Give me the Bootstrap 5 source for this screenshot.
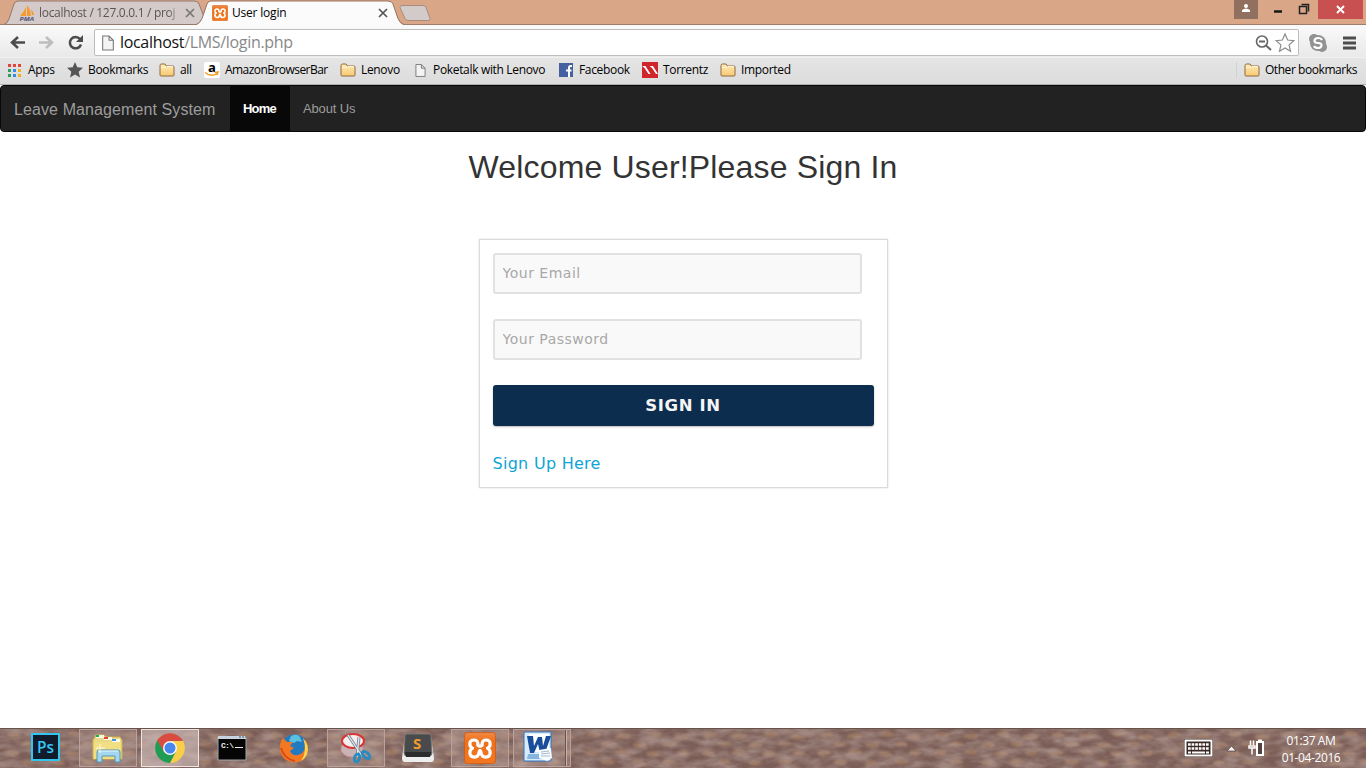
<!DOCTYPE html>
<html lang="en">
<head>
<meta charset="utf-8">
<title>User login</title>
<link href="https://cdn.jsdelivr.net/npm/bootstrap@5.3.0/dist/css/bootstrap.min.css" rel="stylesheet">
<style>
body{width:1366px;height:768px;overflow:hidden;font-family:"Open Sans","Noto Sans",sans-serif;font-size:12px;line-height:16px;color:#000;background:#fff}
svg{display:block;flex:none}
.strip{height:25px;background:#d9a688;position:relative;flex:none}
.strip .shapes{position:absolute;left:0;top:0}
.strip .labels{position:relative;height:25px;display:grid;grid-template-columns:19px 181px 12px 176px 1fr auto;align-items:center}
.tablabel{white-space:nowrap;font-size:12px;letter-spacing:-.2px}
.fade-end{width:142px;color:#5b5556;letter-spacing:-.3px;-webkit-mask-image:linear-gradient(90deg,#000 91%,transparent 100%)}
.toolbar{height:32px;background:linear-gradient(#fafafa,#e9e9e9);padding:4px 8px 1px 9px;flex:none}
.omni{width:1205px;height:27px;background:#fff;border:1px solid #bdbdbd;border-radius:2px;font-size:16px;padding:0 3px 0 6px}
.omni .url{letter-spacing:-.32px;color:#888;line-height:20px;padding-bottom:1px}
.omni .url b{font-weight:400;color:#111}
.marks{height:28px;background:linear-gradient(#e5e5e5,#dcdcdc);border-bottom:1px solid #aab0ae;border-top:1px solid #f0f0f0;display:grid;grid-template-columns:59px 92px 45px 136px 75px 144px 83px 78px 1fr auto;padding:0 9px 2px 8px;align-items:center;flex:none}
.bm{display:flex;align-items:center;gap:5px;white-space:nowrap;letter-spacing:-.33px}
.mainnav{height:47px;background:#222;border:1px solid #080808;border-radius:4px;padding:0;font-family:"Liberation Sans",sans-serif;flex:none}
.mainnav .navbar-brand{color:#9d9d9d;font-size:16px;padding:2px 0 0 13px;margin:0;width:229px;letter-spacing:.1px}
.mainnav .nav-link{color:#9d9d9d;font-size:13px;height:45px;padding:0 13px!important;line-height:46px}
.mainnav .nav-link.active{color:#fff;font-weight:700;background:#080808;width:60px;letter-spacing:-.8px}
.mainnav .about{letter-spacing:-.15px}
.heading{font:400 32px/36px "Liberation Sans",sans-serif;color:#333;letter-spacing:.17px;padding-top:17px;margin:0 0 54px}
.signin{width:409px;height:249px;border:1px solid #dadada;box-shadow:0 0 2px #ddd;padding:13px 13px;font-family:"DejaVu Sans",sans-serif}
.signin .form-control{width:369px;height:41px;border:2px solid #e1e1e1;border-radius:3px;background:#f9f9f9;font-size:14px;letter-spacing:.5px;padding:0 8px 2px;margin-bottom:25px}
.signin .form-control::placeholder{color:#a8a8a8}
.signin .btn{width:381px;height:41px;background:#0d2d4e;color:#f5f5f5;border:0;border-radius:3px;font-weight:700;font-size:16.5px;letter-spacing:.6px;box-shadow:0 1px 2px #bbb;padding:2px 0 0}
.signup{font-size:16px;color:#0fa4d3;text-decoration:none;margin-top:27px;line-height:22px;letter-spacing:.28px}
.taskbar{height:40px;position:relative;background:#7b6058;flex:none;overflow:hidden}
.taskbar .texture{position:absolute;left:0;top:0}
.taskrow{position:relative;padding-left:17px;height:40px;gap:4px}
.app{width:58px;height:38px;display:flex;align-items:center;justify-content:center;margin-top:1px}
.opened{background:#c7aea74c;border:1px solid #b9a29d}
.current{background:#cbb9b7a8;border:1px solid #eee4e2}
.clock{color:#fff;font-size:12px;line-height:17px;width:70px;text-align:center;letter-spacing:-.4px;margin:2px 0 0 5px}
</style>
</head>
<body>
<svg width="0" height="0" class="position-absolute"><defs>
<linearGradient id="fg" x2="0" y2="1"><stop stop-color="#ffecb8"/><stop offset="1" stop-color="#f6c971"/></linearGradient>
<linearGradient id="xg" x2="0" y2="1"><stop stop-color="#f08a45"/><stop offset=".3" stop-color="#ee701c"/><stop offset="1" stop-color="#f0781f"/></linearGradient>
<symbol id="folder" viewBox="0 0 16 14"><path d="M1 12V2.500Q1 1 2.500 1H6l1.500 2H14q1 0 1 1v8q0 1-1 1H2q-1 0-1-1Z" fill="url(#fg)" stroke="#926940"/><path d="M2 4.500h5l1-1h6" fill="none" stroke="#fff5d5"/></symbol>
<symbol id="xampp" viewBox="0 0 30 30"><rect x=".4" y=".4" width="29.200" height="29.200" rx="3" fill="url(#xg)" stroke="#cf5a16" stroke-width=".8"/><path d="M13 12.500Q13.500 7.500 9.500 7.500 5.500 7.500 5.500 11.200q0 3 2.500 4-2.500 1-2.500 4.200 0 4.100 4.500 4.100 3.500 0 4-4 .3-2 1-2t1 2q.5 4 4 4 4.500 0 4.500-4.100 0-3.200-2.500-4.200 2.500-1 2.500-4 0-3.700-4-3.700-4 0-3.500 5-2 1.800-4 0Z" fill="none" stroke="#fff" stroke-width="3" stroke-linejoin="round"/></symbol>
<symbol id="page" viewBox="0 0 12 15"><path d="M1 1h6l4 4v9H1ZM7 1v4h4" fill="#f4f4f4" stroke="#777"/></symbol>
</defs></svg>
<div class="d-flex flex-column h-100">
<header class="strip">
<svg class="shapes" width="1366" height="25"><path d="M0 24.500H1366" stroke="#a27d69"/><path d="M4 24.500Q7 24 9 19L14 4q1-3 4-3H194q4 0 5 3l8 20.500Z" fill="#d3cac9" stroke="#94796d"/><path d="M196 25q4-1 6-6l5-15q1-3 4-3H388q4 0 5 3l5 15q2 5 6 6Z" fill="#fbfbfb"/><path d="M196 24.500q4-1 6-6l5-14.500q1-3 4-3H388q4 0 5 3l5 14.500q2 5 6 6" fill="none" stroke="#97735e"/><path d="M402 5.500h21q2 0 3 2l4 11q1 2-2 2h-20q-2 0-3-2l-5-11q0-2 2-2Z" fill="#d2cbca" stroke="#aa8c7c"/>
<path d="M186 9l8 8m0-8l-8 8" stroke="#777" stroke-width="1.700"/><path d="M379 9l8 8m0-8l-8 8" stroke="#555" stroke-width="1.700"/></svg>
<div class="labels"><span></span><div class="d-flex gap-1"><svg width="16" height="16" viewBox="0 0 16 16" overflow="visible"><path d="M7 2v9l-6 0Q5 7 7 2M8 0q4 5 4 11H8M12 4q3 4 3 6h-2" fill="#f59b2d"/><text x=".5" y="15.500" font-size="5.500" font-weight="700" font-style="italic" textLength="14.500" lengthAdjust="spacingAndGlyphs" fill="#555376">PMA</text></svg><span class="tablabel fade-end">localhost / 127.0.0.1 / proj</span></div><span></span><div class="d-flex gap-1"><svg width="16" height="16"><use href="#xampp"/></svg><span class="tablabel">User login</span></div><span></span>
<svg width="133" height="25"><path d="M1 0h24v19H1Z" fill="#92705f"/><circle cx="13" cy="6" r="2" fill="#fff"/><path d="M9 12V10q4-3 8 0v2Z" fill="#fff"/><path d="M41 11.500h8" stroke="#171717" stroke-width="2.500"/><path d="M66.500 6.500h7v7h-7ZM68.500 4.500h7v7" fill="none" stroke="#222" stroke-width="1.500"/><path d="M85 0h45v19H85Z" fill="#c85050"/><path d="M104 6l7 7m0-7l-7 7" stroke="#fff" stroke-width="2"/></svg></div>
</header>
<div class="toolbar d-flex align-items-center">
<svg width="85" height="27" viewBox="9 29 85 27"><path d="M25 42.500H12m6-5.500l-6 5.500 6 5.500" fill="none" stroke="#4c4c4c" stroke-width="2.500"/><path d="M39 42.500h13m-6-5.500l6 5.500-6 5.500" fill="none" stroke="#bdbdbd" stroke-width="2.500"/><path d="M80 39a5.700 5.700 0 1 0 1 5.500" fill="none" stroke="#4c4c4c" stroke-width="2.500"/><path d="M83 35v7h-7Z" fill="#4c4c4c"/></svg>
<div class="omni d-flex align-items-center"><svg width="14" height="16" style="margin-right:5px"><use href="#page"/></svg><span class="url flex-grow-1"><b>localhost</b>/LMS/login.php</span>
<svg width="42" height="22"><circle cx="9" cy="9.500" r="5.500" fill="none" stroke="#666" stroke-width="1.600"/><path d="M13 13.500l5 4.500M6 9.500h6" stroke="#666" stroke-width="2"/><path d="M32 2l2.600 6 6.200.7-4.700 4.200 1.400 6.400L32 16l-5.500 3.300 1.400-6.400-4.700-4.200 6.200-.7Z" fill="#fff" stroke="#8b8b8b" stroke-width="1.200"/></svg></div>
<svg class="ms-auto" width="49" height="22"><circle cx="9" cy="11" r="8" fill="#929292"/><circle cx="5" cy="7" r="5" fill="#929292"/><circle cx="13" cy="15" r="5" fill="#929292"/><path d="M13 8Q12 6 9 6T5.500 8.500 9 11t3.500 2.500T9 16t-4-2" fill="none" stroke="#fff" stroke-width="2.200"/><path d="M34 6h13M34 11h13M34 16h13" stroke="#4d4d4d" stroke-width="2.800"/></svg>
</div>
<nav class="marks">
<div class="bm" style="gap:7px"><svg width="13" height="13"><path d="M0 0h3v3H0M5 0h3v3H5M10 0h3v3h-3" fill="#e8433b"/><path d="M0 5h3v3H0M0 10h3v3H0" fill="#26a35a"/><path d="M5 5h3v3H5M5 10h3v3H5" fill="#398bea"/><path d="M10 5h3v3h-3M10 10h3v3h-3" fill="#efb21b"/></svg>Apps</div>
<div class="bm"><svg width="16" height="16"><path d="M8 0l2.300 5.300 5.700.5-4.300 3.900 1.300 5.800-5-3-5 3 1.300-5.800L0 5.800l5.700-.5Z" fill="#555"/></svg>Bookmarks</div>
<div class="bm"><svg width="16" height="14"><use href="#folder"/></svg>all</div>
<div class="bm"><svg width="16" height="16" overflow="visible"><rect width="16" height="16" rx="2" fill="#fff"/><text x="4" y="10" font-size="13" font-weight="700">a</text><path d="M1 10.500q6 5 12 1M11 10.500l3-.5-1 3" fill="none" stroke="#f7981d" stroke-width="1.500"/></svg><span style="letter-spacing:-.55px">AmazonBrowserBar</span></div>
<div class="bm"><svg width="16" height="14"><use href="#folder"/></svg>Lenovo</div>
<div class="bm" style="gap:7px"><svg width="11" height="15"><use href="#page"/></svg>Poketalk with Lenovo</div>
<div class="bm gap-1"><svg width="16" height="14"><rect width="14" height="14" fill="#4560a0"/><path d="M13 3h-1.500Q10 3 10 5v9M7 7.500h5.500" fill="none" stroke="#fff" stroke-width="2"/></svg>Facebook</div>
<div class="bm"><svg width="16" height="16"><path d="M0 0h16v16H0" fill="#cf252b"/><path d="M0 4h3.500l5 8H6.500L2.500 6ZM7.500 4H11l5 8h-2L10 6Z" fill="#fff"/></svg>Torrentz</div>
<div class="bm"><svg width="16" height="14"><use href="#folder"/></svg>Imported</div>
<div class="bm" style="border-left:1px solid #c8d4db;padding-left:7px"><svg width="16" height="14"><use href="#folder"/></svg><span style="letter-spacing:-.43px">Other bookmarks</span></div>
</nav>
<nav class="mainnav navbar navbar-expand"><a class="navbar-brand" href="#">Leave Management System</a><div class="navbar-nav"><a class="nav-link active" href="#">Home</a><a class="nav-link about" href="#">About Us</a></div></nav>
<main class="flex-grow-1 d-flex flex-column align-items-center">
<h2 class="heading">Welcome User!Please Sign In</h2>
<form class="signin"><input class="form-control" type="email" placeholder="Your Email"><input class="form-control" type="password" placeholder="Your Password"><button class="btn d-block" type="button">SIGN IN</button><a href="#" class="signup d-block">Sign Up Here</a></form>
</main>
<footer class="taskbar">
<svg class="texture" width="1366" height="40"><defs><filter id="soft"><feGaussianBlur stdDeviation="1.300"/></filter><filter id="grain" x="0" y="0" width="100%" height="100%"><feTurbulence type="fractalNoise" baseFrequency=".05 .12" numOctaves="3" seed="8"/><feColorMatrix values="0 0 0 0 .49  0 0 0 0 .37  0 0 0 0 .34  2 0 0 0 -.6"/></filter><pattern id="stone" width="116" height="40" patternUnits="userSpaceOnUse"><path d="M0 0h116v40H0" fill="#7b5e57"/><g fill="#a17b65" opacity=".8" filter="url(#soft)"><ellipse cx="14" cy="7" rx="7" ry="2.800"/><ellipse cx="43" cy="8" rx="8" ry="3"/><ellipse cx="75" cy="6" rx="7" ry="3"/><ellipse cx="102" cy="9" rx="8" ry="3"/><ellipse cx="28" cy="16" rx="7" ry="2.500"/><ellipse cx="60" cy="17" rx="7" ry="3"/><ellipse cx="89" cy="16" rx="7" ry="2.500"/><ellipse cx="12" cy="25" rx="7" ry="3"/><ellipse cx="43" cy="24" rx="7" ry="3"/><ellipse cx="73" cy="26" rx="7" ry="3"/><ellipse cx="103" cy="25" rx="6" ry="3"/><ellipse cx="28" cy="34" rx="7" ry="3"/><ellipse cx="59" cy="35" rx="6" ry="3"/><ellipse cx="89" cy="34" rx="7" ry="3"/></g></pattern></defs><rect width="1366" height="40" fill="url(#stone)"/><rect width="1366" height="40" filter="url(#grain)" opacity=".6" style="color-interpolation-filters:sRGB"/><path d="M0 .5h1366" stroke="#665349"/></svg>
<div class="taskrow d-flex">
<div class="app"><svg width="29" height="28" style="margin:-3px 2px 0 0"><rect x="1" y="1" width="27" height="26" fill="#101b2b" stroke="#31c5f0" stroke-width="2"/><text x="6" y="20" font-size="16" font-weight="600" textLength="17" lengthAdjust="spacingAndGlyphs" fill="#35c8f4">Ps</text></svg></div>
<div class="app opened"><svg width="32" height="32"><path d="M2 7l2-4h8l2 2h14l2 3v19H1V7Z" fill="#ead889" stroke="#d0b24e"/><path d="M4 3h8v3H4ZM12 5h8v3h-8ZM20 7h8v3h-8Z" fill="#fffbe9"/><path d="M4 3h3v2H4Z" fill="#20af42"/><path d="M12 5h4v2h-4Z" fill="#df4639"/><path d="M20 7h4v2h-4Z" fill="#4199dc"/><path d="M2 10h27l-1 17H2Z" fill="#f2df83"/><path d="M5 30V20q0-2 2-2h19q2 0 2 2v10h-5v-6H10v6Z" fill="#a4d7ed" stroke="#5097ba"/><path d="M6 19h20M8 12v9M4 16h9" stroke="#fff" opacity=".8"/></svg></div>
<div class="app current"><svg width="30" height="30" viewBox="-15 -15 30 30"><path d="M0 0L-12.900-7.400A14.900 14.900 0 0 1 12.900-7.400Z" fill="#d94c40"/><path d="M0 0L-12.900-7.400A14.900 14.900 0 0 0 0 14.900Z" fill="#229c54"/><path d="M0 0L12.900-7.400A14.900 14.900 0 0 1 0 14.900Z" fill="#f8cf47"/><path d="M-12.900-7.400L-6 3.500 0-7Z" fill="#d94c40"/><path d="M0 14.900L6 3.500-6 3.500Z" fill="#229c54"/><path d="M13-7H0l6 10.500Z" fill="#f8cf47"/><circle r="7" fill="#f7f7f7"/><circle r="5.500" fill="#4788ef"/></svg></div>
<div class="app"><svg width="30" height="26"><path d="M1 2h28v23H1Z" fill="#050505" stroke="#9da5a9"/><path d="M1 1h28v3H1Z" fill="#c8d3df"/><path d="M22 2h2m1 0h2m1 0h1" stroke="#416071"/><text x="4" y="13" font-family="Liberation Mono" font-size="8" font-weight="700" fill="#eee" textLength="13">C:\</text><path d="M18 12.500h8" stroke="#eee"/></svg></div>
<div class="app"><svg width="31" height="31"><circle cx="15.500" cy="15" r="13.500" fill="#237ac1"/><path d="M12 3q6-3 9 1l2 5-5-1-3 2-5-2Z" fill="#59c0df"/><path d="M4 5l4 4 6 0-3 4 4 2-4 3q2 5 8 4 9-2 7-16 5 7 2 15Q23 31 14 29 3 28 1 18 0 10 4 5Z" fill="#f47821"/><path d="M24 5q7 8 4 16-2 5-6 7 7-10 2-23Z" fill="#ffd64a"/><path d="M2 15q3 11 14 13" fill="none" stroke="#d84b1d" stroke-width="2"/></svg></div>
<div class="app opened"><svg width="32" height="32"><ellipse cx="12" cy="17" rx="11" ry="8" fill="#c9b3b5" stroke="#c89297"/><ellipse cx="13" cy="9" rx="11" ry="7" fill="#f5eeee" stroke="#db3435" stroke-width="2"/><path d="M8 3l14 21M19 5l-2 20" stroke="#77858d" stroke-width="3"/><path d="M8 3l14 21M19 5l-2 20" stroke="#e2ebef" stroke-width="1.300"/><ellipse cx="17" cy="26" rx="2.500" ry="4" transform="rotate(15 17 26)" fill="none" stroke="#278bc2" stroke-width="2.800"/><ellipse cx="26" cy="23" rx="2.500" ry="4.500" transform="rotate(-48 26 23)" fill="none" stroke="#278bc2" stroke-width="2.800"/></svg></div>
<div class="app"><svg width="32" height="30"><path d="M3 4h26l3 21q0 4-3 4H3q-3 0-3-4Z" fill="#eee"/><path d="M5 1h22q2 0 2 2l1 17q0 3-3 3H5q-3 0-3-3L3 3q0-2 2-2Z" fill="#494a4b" stroke="#777"/><path d="M3 19h26l-1 5H4Z" fill="#2b2c2d"/><text x="11" y="16" font-size="15" font-weight="700" fill="#f29b31">S</text></svg></div>
<div class="app opened"><svg width="32" height="32" style="margin-top:-1px"><use href="#xampp"/></svg></div>
<div class="app opened position-relative"><svg width="32" height="32" style="margin:-3px 6px 0 0"><path d="M2 1h26v29H1V2Z" fill="#d9eafa" stroke="#2d75c5"/><path d="M6 3h20v18H6Z" fill="#fff"/><path d="M5 23h23v5H4Z" fill="#86b6df"/><path d="M4 5h6l1 10 4-9h4l1 9 3-10h5l-6 17h-5l-2-9-4 9H7Z" fill="#174d9b"/><path d="M16 19l12-2 1 10-5 3-8-3Z" fill="#f8fbff"/><path d="M18 21l8-1m-8 3l9-1m-9 3l9 0" stroke="#a7bcd2"/></svg><svg class="position-absolute end-0 top-0" width="6" height="36"><path d="M1.500 0v36" stroke="#6a5450"/><path d="M2.500 0v36" stroke="#c5b0ab"/></svg></div>
<div class="ms-auto d-flex align-items-center me-3" style="padding-right:4px">
<svg width="87" height="24"><path d="M0 3h29v18H0Z" fill="#3b2925"/><rect x="1.500" y="4.500" width="26" height="15" fill="#3b2925" stroke="#fff" stroke-width="2"/><path d="M4 8.500h21M4 12.500h21" stroke="#fff" stroke-width="2.700" stroke-dasharray="2.700 .9"/><path d="M4 16.500h3m1 0h13m1 0h3" stroke="#fff" stroke-width="2"/><path d="M43 15l4.500-5 4.500 5Z" fill="#f7f7f7" stroke="#4b3835" stroke-width=".7"/><path d="M66.500 4.500V9m3-4.500V9m-4.500 1h6v2h-6Zm3 2v6.500" fill="none" stroke="#fff" stroke-width="1.500"/><rect x="73" y="6" width="6" height="13" fill="#54423e" stroke="#fff" stroke-width="2"/><path d="M74 4.500h4" stroke="#fff" stroke-width="2"/></svg>
<div class="clock">01:37 AM<br>01-04-2016</div></div>
</div>
</footer>
</div>
<script src="https://cdn.jsdelivr.net/npm/bootstrap@5.3.0/dist/js/bootstrap.bundle.min.js"></script>
</body>
</html>
